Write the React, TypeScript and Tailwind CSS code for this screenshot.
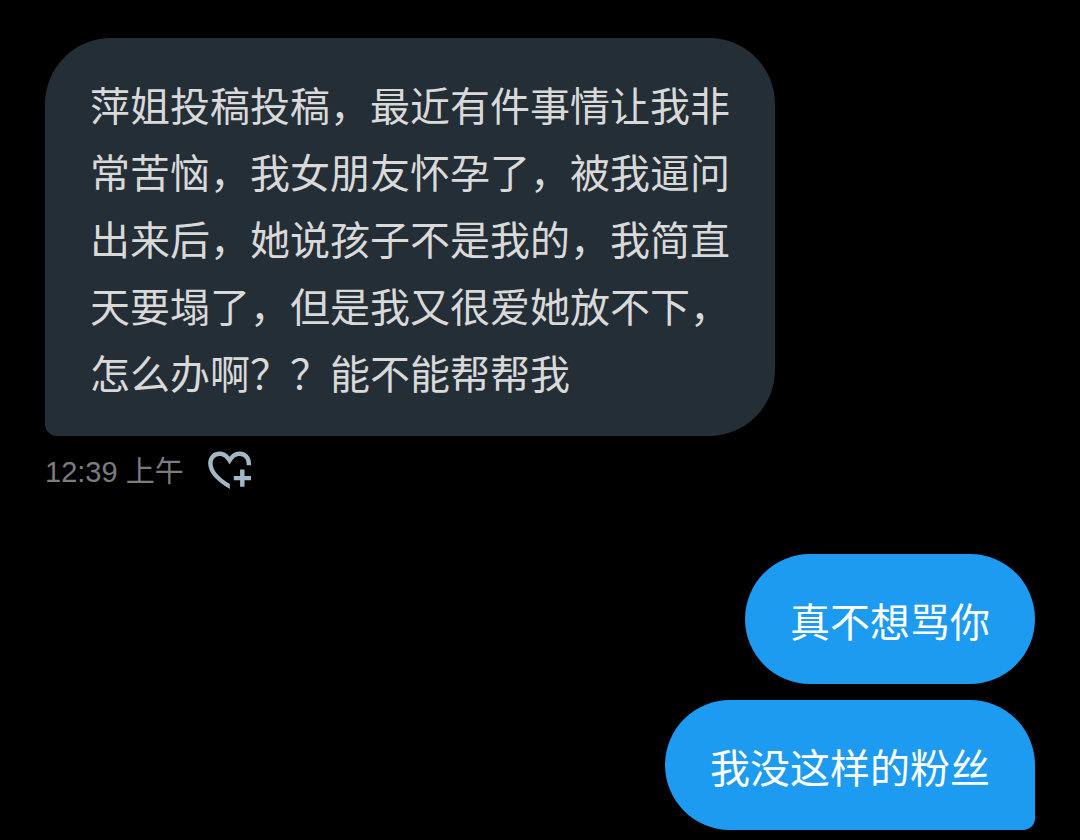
import React from 'react';
import { clsx } from 'clsx';

interface Message {
  id: number;
  text: string;
  last: boolean;
}

const received: Message[] = [
  {
    id: 1,
    text: '萍姐投稿投稿，最近有件事情让我非常苦恼，我女朋友怀孕了，被我逼问出来后，她说孩子不是我的，我简直天要塌了，但是我又很爱她放不下，怎么办啊？？能不能帮帮我',
    last: true,
  },
];

const sent: Message[] = [
  { id: 2, text: '真不想骂你', last: false },
  { id: 3, text: '我没这样的粉丝', last: true },
];

const HeartPlusIcon: React.FC = () => (
  <svg
    viewBox="0 0 44 40"
    fill="none"
    stroke="currentColor"
    strokeWidth="4.4"
    className="w-11 h-10"
    aria-hidden="true"
  >
    <path
      fill="currentColor"
      stroke="none"
      d="M21.8 39C8.4 31 0.2 22.4 0.2 13.4C0.2 6.2 5.2 1.6 11.4 1.6C15.4 1.6 19.2 3.4 21.6 6.8C24 3.4 27.8 1.6 31.8 1.6C38 1.6 43 6.4 43 13.4V15.2H38.6V13.4C38.6 8.8 35.4 5.9 31.6 5.9C27.8 5.9 25.4 8.2 23.4 11.6L21.6 14.6L19.8 11.6C17.8 8.2 15.4 5.9 11.6 5.9C7.8 5.9 4.6 8.8 4.6 13.4C4.6 20 10.8 27.2 21.8 34Z"
    />
    <path d="M34.3 19.4V36.8M25.8 28.1H43" />
  </svg>
);

const Bubble: React.FC<{ message: Message; mine?: boolean }> = ({ message, mine }) => (
  <p
    className={clsx(
      'max-w-[730px] px-[45px] pt-[33px] pb-[30px] text-[40px] leading-[67px] break-all rounded-[66px]',
      mine ? 'bg-[#1d9bf0] text-white' : 'bg-[#242e36] text-[#d9d9d9]',
      message.last && (mine ? 'rounded-br-xl' : 'rounded-bl-xl')
    )}
  >
    {message.text}
  </p>
);

export default function App() {
  return (
    <main
      lang="zh-CN"
      className="min-h-screen bg-black px-[45px] pt-[38px] pb-2 font-['Noto_Sans_CJK_SC',sans-serif]"
    >
      <section className="flex flex-col items-start">
        {received.map((message) => (
          <Bubble key={message.id} message={message} />
        ))}
        <div className="mt-3 flex items-start gap-6">
          <time
            dateTime="00:39"
            className="text-[29px] leading-[48px] text-[#7c7c80] font-['Liberation_Sans','Noto_Sans_CJK_SC',sans-serif]"
          >
            12:39 上午
          </time>
          <button type="button" aria-label="添加回应" className="mt-0.5 text-[#a3b8c6]">
            <HeartPlusIcon />
          </button>
        </div>
      </section>

      <section className="mt-[58px] flex flex-col items-end gap-4">
        {sent.map((message) => (
          <Bubble key={message.id} message={message} mine />
        ))}
      </section>
    </main>
  );
}
